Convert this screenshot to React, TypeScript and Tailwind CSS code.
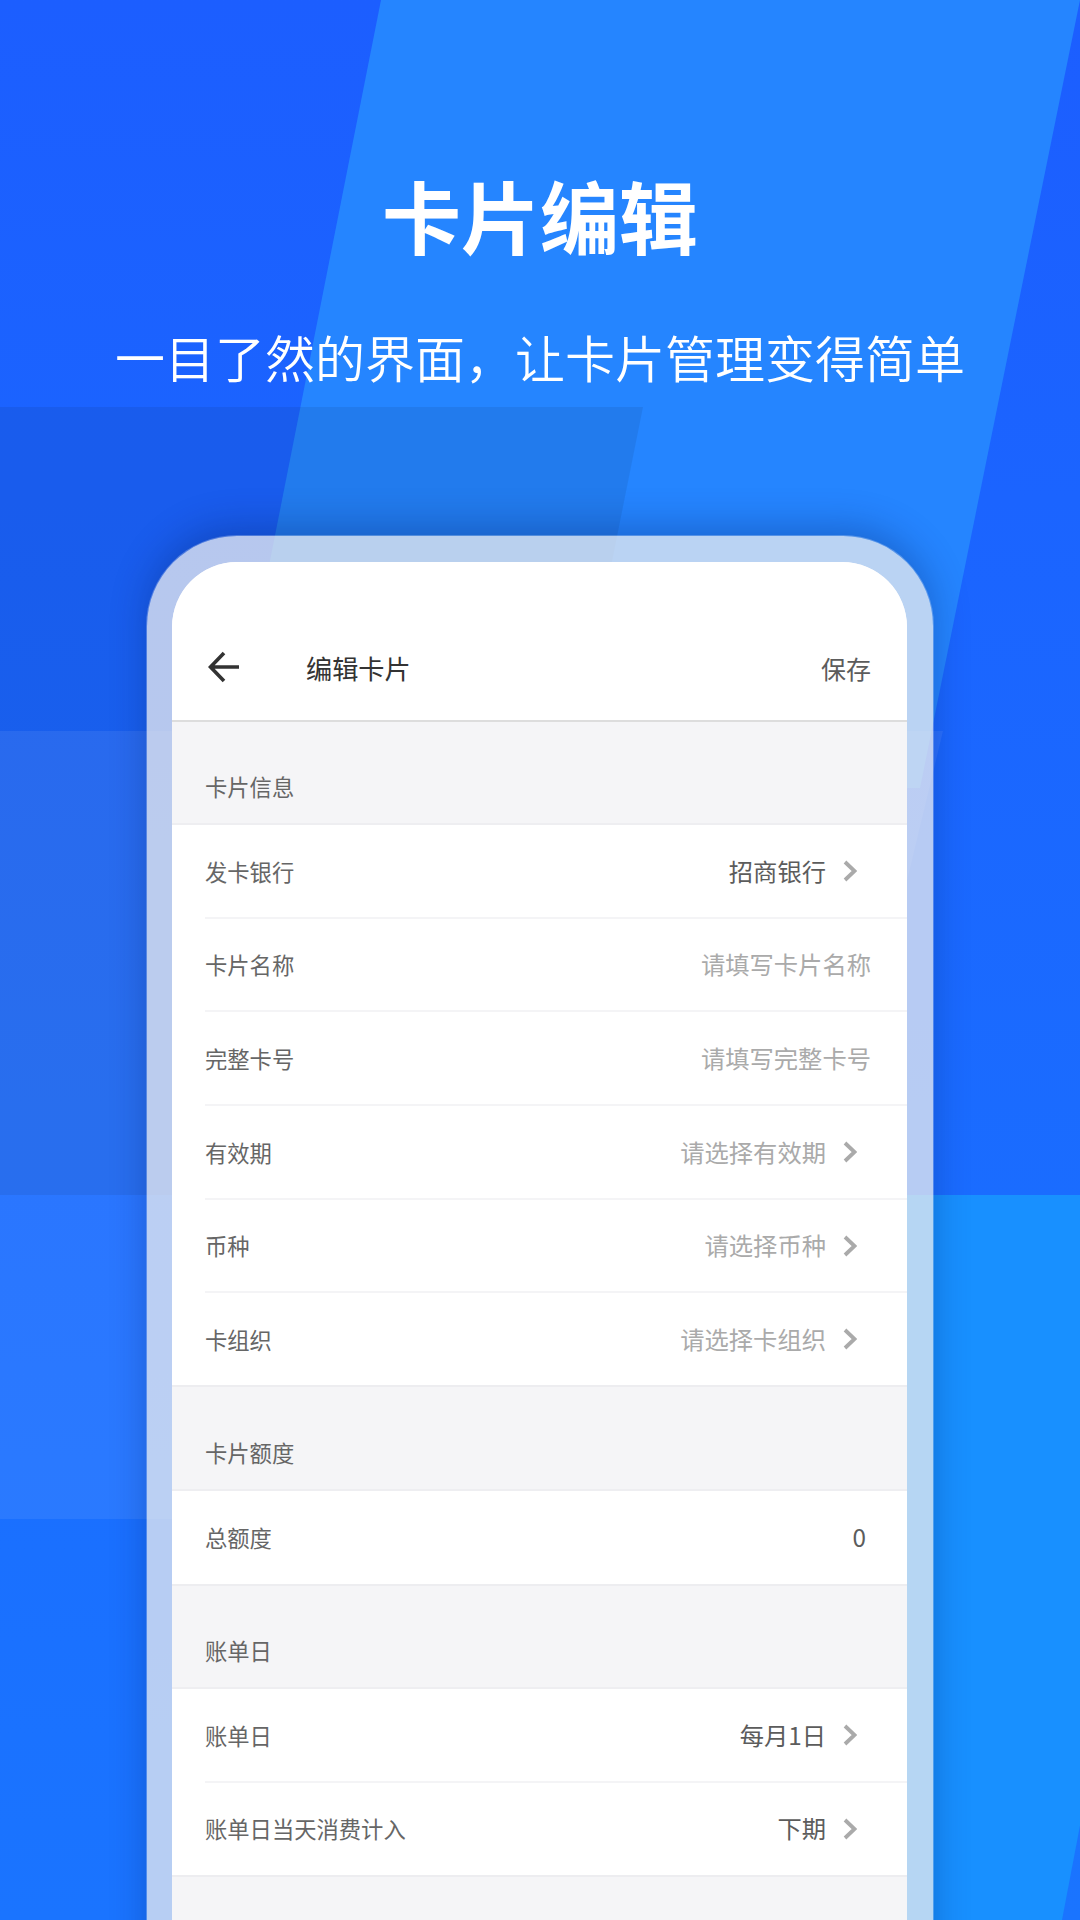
import React from 'react';

type Row = { label: string; value: string; placeholder?: boolean; arrow?: boolean; last?: boolean; numeric?: boolean };

const cardInfo: Row[] = [
  { label: '发卡银行', value: '招商银行', arrow: true },
  { label: '卡片名称', value: '请填写卡片名称', placeholder: true },
  { label: '完整卡号', value: '请填写完整卡号', placeholder: true },
  { label: '有效期', value: '请选择有效期', placeholder: true, arrow: true },
  { label: '币种', value: '请选择币种', placeholder: true, arrow: true },
  { label: '卡组织', value: '请选择卡组织', placeholder: true, arrow: true, last: true },
];

const billing: Row[] = [
  { label: '账单日', value: '每月1日', arrow: true },
  { label: '账单日当天消费计入', value: '下期', arrow: true, last: true },
];

function Chevron() {
  return (
    <svg className="mr-[50px] ml-[17px]" width="14" height="22" viewBox="0 0 14 22" fill="none">
      <path d="M2 2 L11.5 11 L2 20" stroke="#aaaaaa" strokeWidth="3.8" />
    </svg>
  );
}

function FormRow({ row }: { row: Row }) {
  return (
    <div className={`flex items-center bg-white pl-[33px] ${row.numeric ? 'h-[95px]' : 'h-[93.7px]'} ${row.last ? 'border-b-2 border-[#ededf0]' : ''}`}>
      <div className={`flex h-full flex-1 items-center justify-between ${row.last ? '' : 'border-b-2 border-[#f4f4f6]'}`}>
        <span className="pt-px text-[22.3px] text-[#666666]">{row.label}</span>
        <div className={`flex items-center ${row.arrow ? '' : row.numeric ? 'pr-[41px]' : 'pr-[36px]'}`}>
          <span className={`text-[24.3px] ${row.placeholder ? 'text-[#aaaaaa]' : 'text-[#5c5c5c]'}`}>{row.value}</span>
          {row.arrow && <Chevron />}
        </div>
      </div>
    </div>
  );
}

function SectionTitle({ title }: { title: string }) {
  return (
    <div className="flex h-[103px] items-end border-b-2 border-[#eeeef1] pb-[20px] pl-[33px] text-[22.3px] text-[#666666]">
      {title}
    </div>
  );
}

export default function App() {
  return (
    <div className="relative h-[1920px] w-[1080px] overflow-hidden bg-gradient-to-b from-[#1c5eff] to-[#1a74ff] font-['Noto_Sans_CJK_SC','Noto_Sans',sans-serif]">
      {/* background shapes */}
      <svg className="absolute inset-0" width="1080" height="1920" viewBox="0 0 1080 1920">
        <polygon points="381,0 1080,0 920,788 225,788" fill="#2585ff" />
        <polygon points="320,1195 1200,1195 1062,1920 180,1920" fill="#1890ff" />
        <polygon points="0,407 643,407 485,1195 0,1195" fill="#000000" fillOpacity="0.07" />
        <polygon points="0,731 943,731 754,1519 0,1519" fill="#ffffff" fillOpacity="0.07" />
      </svg>

      <div className="relative flex flex-col items-center">
        <h1 className="mt-[165px] text-[79px] leading-[100px] font-bold text-white">卡片编辑</h1>
        <p className="mt-[56px] text-[50px] leading-[70px] font-[350] text-white">一目了然的界面，让卡片管理变得简单</p>

        {/* phone */}
        <div className="mt-[145px] h-[1500px] w-[786px] rounded-t-[90px] bg-[rgba(244,241,238,0.72)] pt-[26px] pr-[26px] pl-[25px] shadow-[0_0_0_1px_rgba(255,255,255,0.25),0_-10px_36px_rgba(0,30,100,0.3)]">
          <div className="h-full overflow-hidden rounded-t-[65px] bg-[#f5f5f7]">
            <div className="flex h-[160px] items-end border-b-2 border-[#dddddd] bg-white pb-[33px]">
              <svg className="mb-[4px] ml-[36px]" width="31" height="32" viewBox="0 0 31 32" fill="none">
                <path d="M16 2 L2.5 16 L16 30 M2.5 16 H31" stroke="#333333" strokeWidth="3.6" />
              </svg>
              <span className="ml-[67px] text-[26.2px] leading-[38px] text-[#333333]">编辑卡片</span>
              <span className="mr-[36px] ml-auto text-[25px] leading-[38px] text-[#5c5c5c]">保存</span>
            </div>

            <SectionTitle title="卡片信息" />
            {cardInfo.map((row) => (
              <FormRow key={row.label} row={row} />
            ))}

            <div className="h-px" />
            <SectionTitle title="卡片额度" />
            <FormRow row={{ label: '总额度', value: '0', last: true, numeric: true }} />

            <SectionTitle title="账单日" />
            {billing.map((row) => (
              <FormRow key={row.label} row={row} />
            ))}
          </div>
        </div>
      </div>
    </div>
  );
}
